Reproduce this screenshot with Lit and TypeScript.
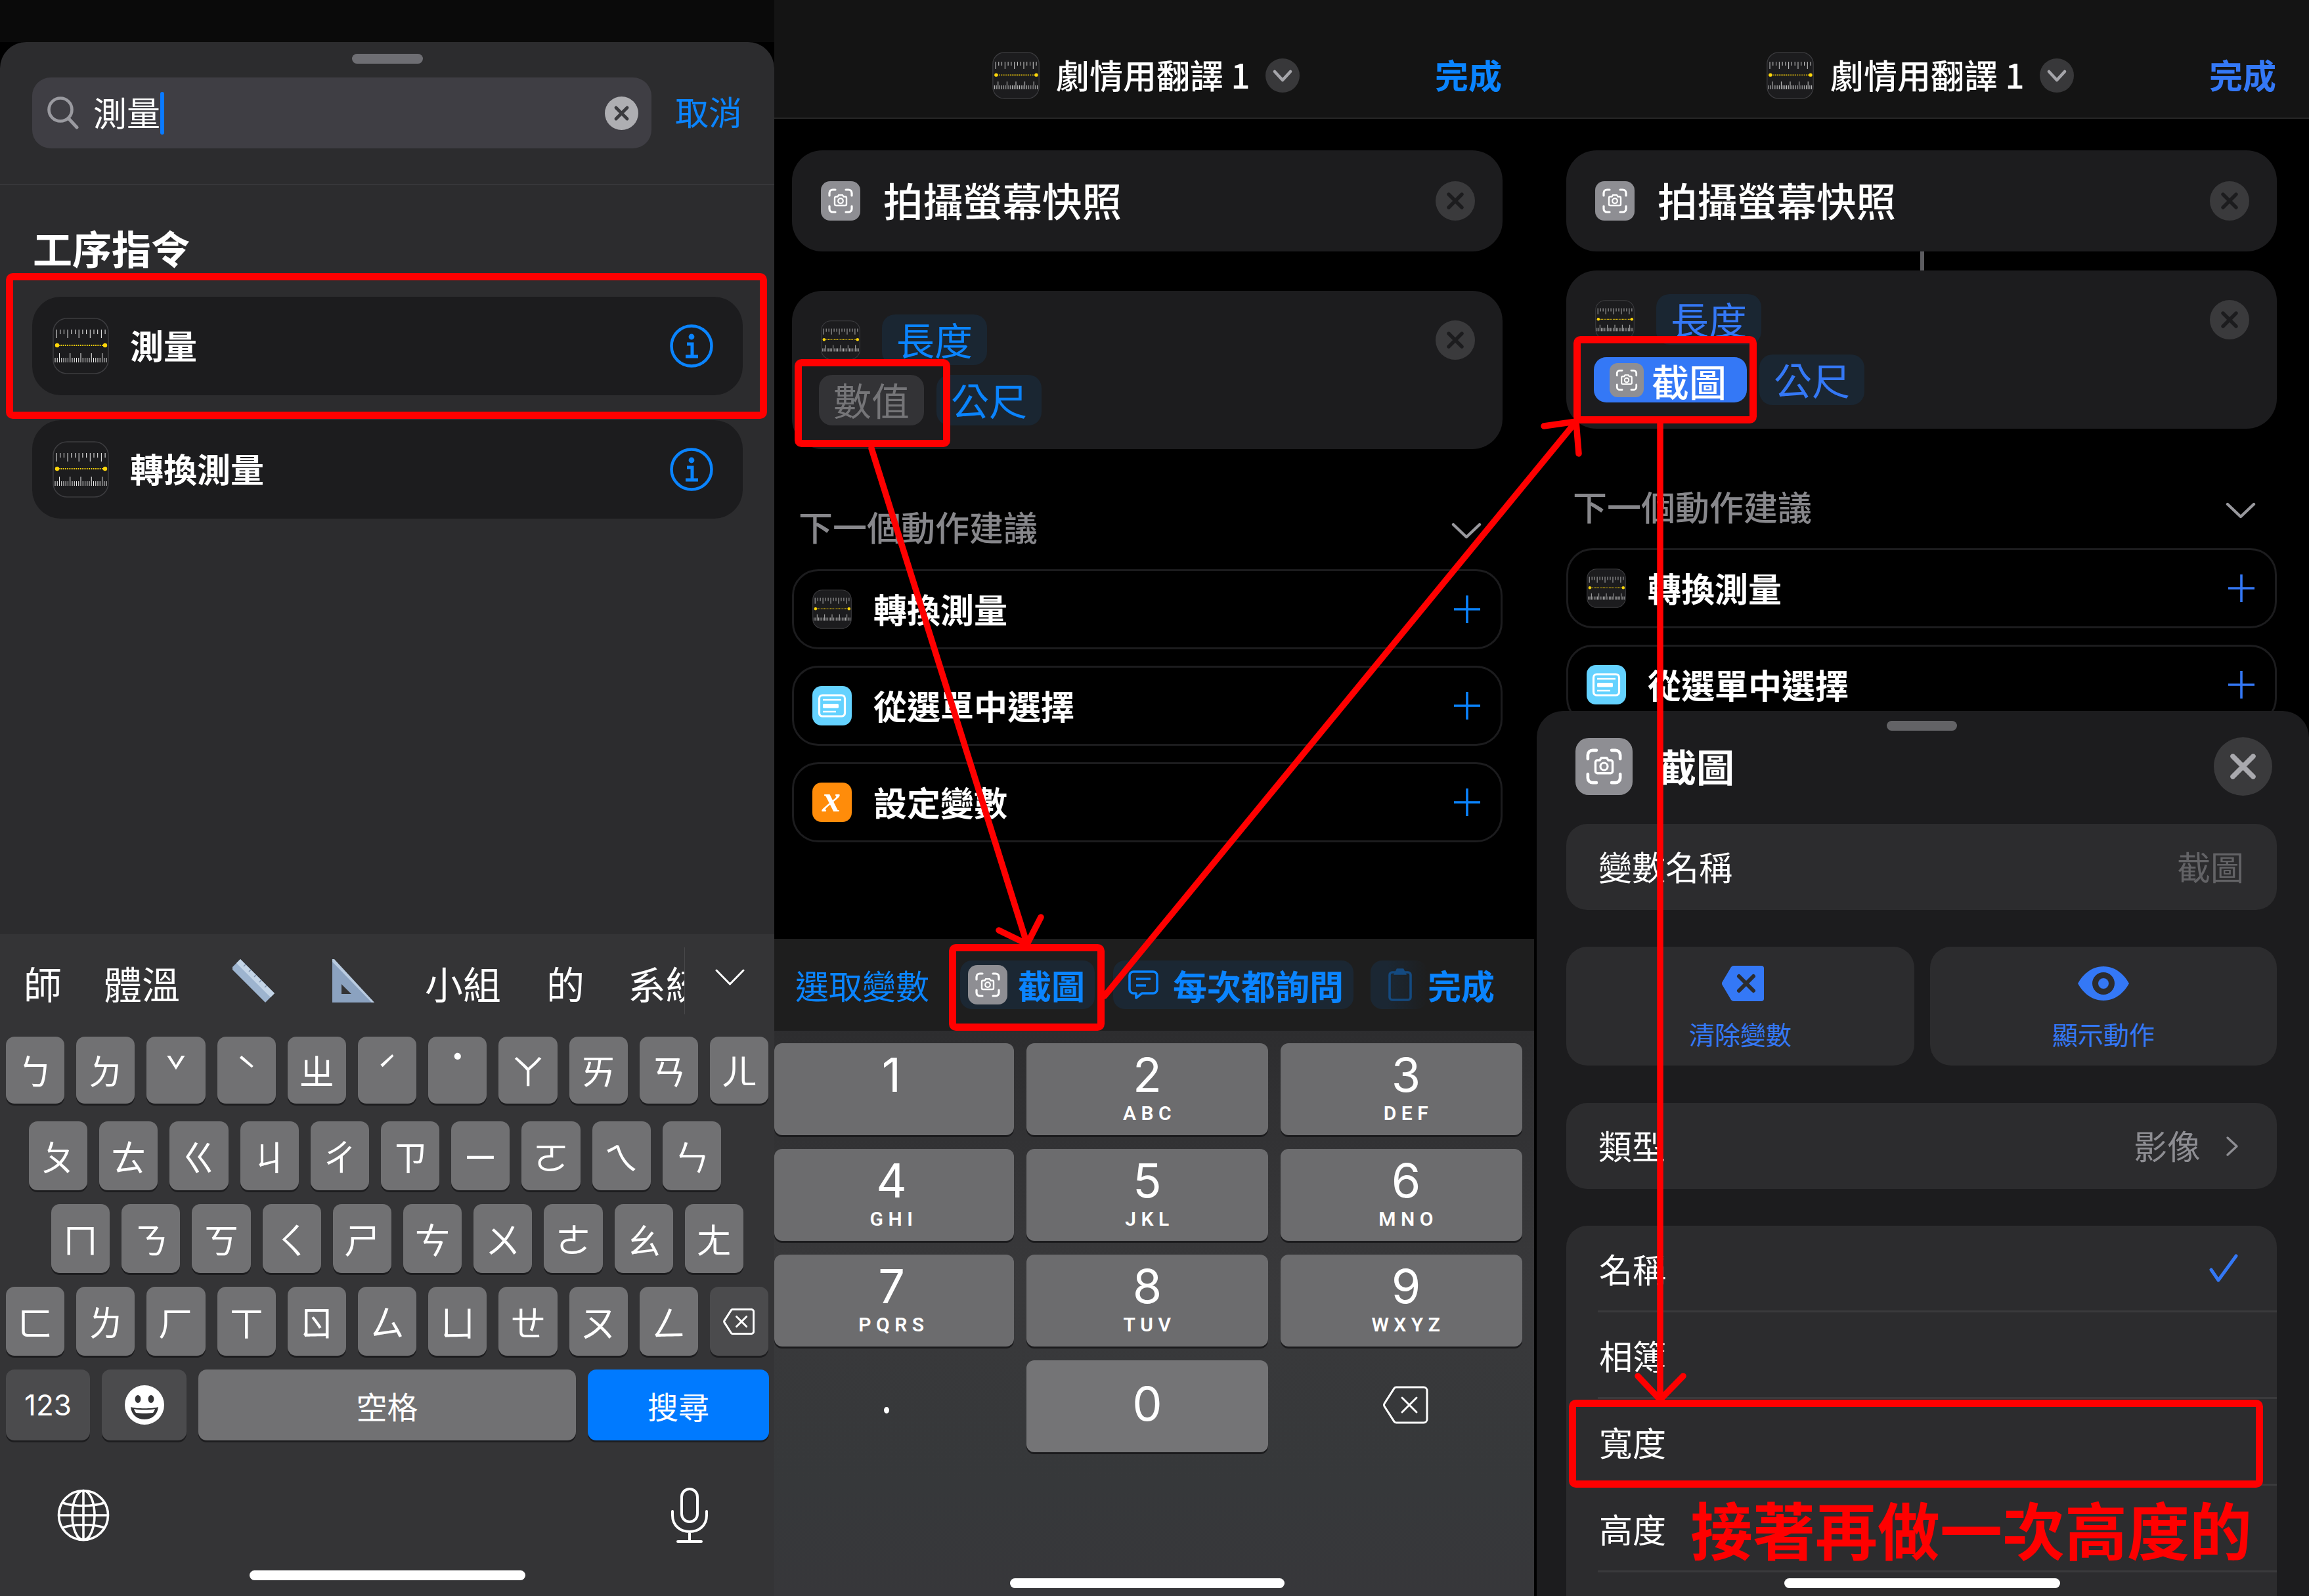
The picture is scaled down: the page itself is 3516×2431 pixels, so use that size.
import { LitElement, html, css, svg } from "lit";
import { customElement } from "lit/decorators.js";

const measureIcon = (cls: string) => {
  const top = Array.from({ length: 14 }, (_, i) => {
    const x = 6 + i * 5.7;
    return svg`<line x1=${x} x2=${x} y1="18" y2=${i % 3 === 0 ? 31 : 25}></line>`;
  });
  const bottom = Array.from({ length: 25 }, (_, i) => {
    const x = 4 + i * 3.25;
    return svg`<line x1=${x} x2=${x} y1="68" y2=${i % 5 === 2 ? 54 : 61}></line>`;
  });
  return html`<svg class=${cls} viewBox="0 0 86 86">
    <rect x="1" y="1" width="84" height="84" rx="21" fill="#1c1c1e" stroke="#3c3c3f" stroke-width="1.5"></rect>
    <g stroke="#f2f2f2" stroke-width="1">${top}${bottom}</g>
    <line x1="9" x2="78" y1="42" y2="42" stroke="#ffd60a" stroke-width="1.8" stroke-dasharray="1.8 1.5"></line>
    <circle cx="7" cy="42" r="3.2" fill="#ffd60a"></circle>
    <circle cx="80" cy="42" r="3.2" fill="#ffd60a"></circle>
  </svg>`;
};

const shotIcon = (cls: string) => html`<svg class=${cls} viewBox="0 0 60 60">
  <rect width="60" height="60" rx="14" fill="#8e8e93"></rect>
  <path d="M13 22v-4a5 5 0 0 1 5-5h4M38 13h4a5 5 0 0 1 5 5v4M47 38v4a5 5 0 0 1-5 5h-4M22 47h-4a5 5 0 0 1-5-5v-4" fill="none" stroke="#fff" stroke-width="3.2" stroke-linecap="round"></path>
  <path d="M21 25.5a2 2 0 0 1 2-2h2.5l1.6-2.4h5.8l1.6 2.4H37a2 2 0 0 1 2 2v9.5a2 2 0 0 1-2 2H23a2 2 0 0 1-2-2z" fill="none" stroke="#fff" stroke-width="2.4"></path>
  <circle cx="30" cy="30" r="3.8" fill="none" stroke="#fff" stroke-width="2.2"></circle>
</svg>`;

const menuIcon = (cls: string) => html`<svg class=${cls} viewBox="0 0 60 60">
  <rect width="60" height="60" rx="14" fill="#64d2ff"></rect>
  <rect x="10.5" y="14" width="39" height="32" rx="5" fill="none" stroke="#fff" stroke-width="3.2"></rect>
  <rect x="16" y="27" width="24" height="6.5" rx="1.5" fill="#fff"></rect>
  <path d="M16 21h28M16 39h20" stroke="#fff" stroke-width="2.6"></path>
</svg>`;

const varIcon = (cls: string) => html`<svg class=${cls} viewBox="0 0 60 60">
  <rect width="60" height="60" rx="14" fill="#ff8c0a"></rect>
  <text x="29" y="44" text-anchor="middle" font-family="Liberation Serif, serif" font-style="italic" font-weight="700" font-size="56" fill="#fff">x</text>
</svg>`;

const info = () => html`<svg class="info" viewBox="0 0 66 66">
  <circle cx="33" cy="33" r="30.5" fill="none" stroke="var(--blue)" stroke-width="4.5"></circle>
  <circle cx="33" cy="19" r="4.4" fill="var(--blue)"></circle>
  <path d="M26 30h8v19M24 49h19" fill="none" stroke="var(--blue)" stroke-width="5"></path>
</svg>`;

const xCircle = () => html`<svg class="xc" viewBox="0 0 60 60">
  <circle cx="30" cy="30" r="30" fill="#3a3a3c"></circle>
  <path d="M20 20l20 20M40 20L20 40" stroke="#1c1c1e" stroke-width="5.4" stroke-linecap="round"></path>
</svg>`;

const chevCircle = () => html`<svg class="chevc" viewBox="0 0 52 52">
  <circle cx="26" cy="26" r="26" fill="#38383a"></circle>
  <path d="M14 20l12 13 12-13" fill="none" stroke="#a5a5aa" stroke-width="4.6" stroke-linecap="round" stroke-linejoin="round"></path>
</svg>`;

const chevDown = () => html`<svg class="chevd" viewBox="0 0 46 25">
  <path d="M3 3l20 19L43 3" fill="none" stroke="#98989d" stroke-width="4.4" stroke-linecap="round" stroke-linejoin="round"></path>
</svg>`;

const plus = () => html`<svg class="plus" viewBox="0 0 40 42">
  <path d="M20 0v42M0 21h40" stroke="var(--blue)" stroke-width="3.6"></path>
</svg>`;

const backspace = (cls: string) => html`<svg class=${cls} viewBox="0 0 70 58">
  <path d="M21 2h42a5 5 0 0 1 5 5v44a5 5 0 0 1-5 5H21a4 4 0 0 1-3-1.6L3 31a4 4 0 0 1 0-4L18 3.6A4 4 0 0 1 21 2z" fill="none" stroke="#fff"></path>
  <path d="M30 18l22 22M52 18L30 40" stroke="#fff" stroke-linecap="round"></path>
</svg>`;

const KB = [
  ["ㄅ", "ㄉ", "ˇ", "ˋ", "ㄓ", "ˊ", "˙", "ㄚ", "ㄞ", "ㄢ", "ㄦ"],
  ["ㄆ", "ㄊ", "ㄍ", "ㄐ", "ㄔ", "ㄗ", "ㄧ", "ㄛ", "ㄟ", "ㄣ"],
  ["ㄇ", "ㄋ", "ㄎ", "ㄑ", "ㄕ", "ㄘ", "ㄨ", "ㄜ", "ㄠ", "ㄤ"],
  ["ㄈ", "ㄌ", "ㄏ", "ㄒ", "ㄖ", "ㄙ", "ㄩ", "ㄝ", "ㄡ", "ㄥ"],
];

const PAD: [string, string][] = [
  ["1", ""], ["2", "ABC"], ["3", "DEF"],
  ["4", "GHI"], ["5", "JKL"], ["6", "MNO"],
  ["7", "PQRS"], ["8", "TUV"], ["9", "WXYZ"],
];

@customElement("app-root")
export class AppRoot extends LitElement {
  static styles = css`
    :host {
      display: block;
      width: 3516px;
      height: 2431px;
      position: relative;
      overflow: hidden;
      background: #000;
      color: #fff;
      font-family: "Noto Sans CJK TC", "Noto Sans", sans-serif;
      --blue: #0a84ff;
    }
    svg { display: block; flex: none; }
    .stage {
      display: grid;
      grid-template-columns: 1179px 1157px 1180px;
      height: 2431px;
    }
    .panel {
      position: relative;
      overflow: hidden;
      display: flex;
      flex-direction: column;
      min-width: 0;
    }
    .p2 { --inset: 27px; --rt: 49px; }
    .p3 { --inset: 49px; --rt: 50px; --blue: #3478f6; }

    /* ---------- panel one ---------- */
    .top1 { height: 64px; background: #0a0a0a; flex: none; }
    .sheet1 {
      flex: 1;
      background: #2c2c2e;
      border-radius: 40px 40px 0 0;
      display: flex;
      flex-direction: column;
      min-height: 0;
    }
    .grab1 {
      width: 108px; height: 15px; border-radius: 8px;
      background: #6e6e73;
      margin: 18px 0 21px 536px;
      flex: none;
    }
    .searchrow { display: flex; align-items: center; padding: 0 0 0 49px; height: 108px; flex: none; }
    .search {
      width: 943px; height: 108px;
      border-radius: 28px;
      background: #3f3e44;
      display: flex; align-items: center;
      padding: 0 20px 0 23px;
      box-sizing: border-box;
      position: relative;
    }
    .mag { width: 48px; height: 50px; }
    .q { font-size: 51px; line-height: 60px; margin: -4px 0 0 22px; }
    .caret { width: 6px; height: 65px; border-radius: 3px; background: #0a7aff; margin-left: 0; }
    .clear { width: 51px; height: 51px; margin-left: auto; }
    .cancel { font-size: 51px; line-height: 60px; color: var(--blue); margin: -6px 0 0 36px; }
    .div1 { height: 1px; background: #434346; margin-top: 54px; flex: none; }
    .h1 { font-size: 60px; line-height: 70px; font-weight: 700; margin: 61px 0 0 50px; flex: none; }
    .res {
      margin: 0 48px 0 49px;
      height: 150px;
      border-radius: 44px;
      background: #1c1c1e;
      display: flex; align-items: center;
      padding: 0 45px 0 31px;
      flex: none;
    }
    .res1 { margin-top: 40px; }
    .res2 { margin-top: 38px; }
    .res .ic { width: 86px; height: 86px; }
    .res .t { font-size: 51px; font-weight: 700; line-height: 60px; margin: -4px 0 0 32px; }
    .info { width: 66px; height: 66px; margin-left: auto; }

    .kb {
      margin-top: auto;
      height: 1008px;
      background: #343436;
      flex: none;
      display: flex;
      flex-direction: column;
    }
    .cands { display: flex; height: 102px; margin-top: 20px; flex: none; align-items: center; }
    .cgrid {
      display: grid;
      grid-template-columns: 122px 196px 152px 141px 185px 124px 86px;
      padding-left: 36px;
      width: 1006px;
      align-items: center;
      font-size: 58px;
      line-height: 70px;
      white-space: nowrap;
      padding-top: 6px;
    }
    .clip { overflow: hidden; }
    .cdiv { width: 1px; height: 102px; background: #47474a; flex: none; }
    .emo { width: 64px; height: 66px; margin-top: -6px; }
    .cclose { width: 45px; height: 25px; margin-left: 46px; margin-top: -12px; }
    .krow { display: flex; gap: 18px; flex: none; }
    .key {
      flex: 0 0 89.2px;
      background: #717173;
      border-radius: 13px;
      box-shadow: 0 3px 0 #1d1d1f;
      display: flex; align-items: center; justify-content: center;
      font-size: 54px;
      line-height: 60px;
    }
    .key.raise span { padding-bottom: 46px; }
    .key.dark { background: #4b4b4d; }
    .kr1 { height: 102px; margin: 34px 0 0 9px; }
    .kr2 { height: 105px; margin: 27px 0 0 44px; }
    .kr3 { height: 105px; margin: 21px 0 0 78px; }
    .kr4 { height: 105px; margin: 21px 0 0 9px; }
    .kr5 {
      display: grid;
      grid-template-columns: 128px 129px 575px 276px;
      gap: 18px;
      height: 108px;
      margin: 21px 0 0 9px;
      flex: none;
    }
    .k5 {
      background: #717173;
      border-radius: 13px;
      box-shadow: 0 3px 0 #1d1d1f;
      display: flex; align-items: center; justify-content: center;
      font-size: 47px;
    }
    .k5.dark { background: #4b4b4d; }
    .k5.num { font-family: "Inter", sans-serif; font-size: 44px; }
    .k5.go { background: #007aff; }
    .bs1 { width: 48px; height: 40px; stroke-width: 4.4; }
    .bs2 { width: 70px; height: 58px; stroke-width: 3; margin: -4px 0 0 12px; }
    .face { width: 60px; height: 60px; }
    .sys { display: flex; justify-content: space-between; height: 84px; margin-top: 72px; padding: 0 101px 0 87px; flex: none; align-items: center; }
    .globe { width: 80px; height: 80px; }
    .mic { width: 56px; height: 84px; }
    .home { height: 15px; background: #fff; border-radius: 8px; flex: none; }
    .home1 { width: 420px; margin: 42px 0 0 380px; }

    /* ---------- shared, panels two and three ---------- */
    .hdr {
      height: 181px;
      background: #141414;
      border-bottom: 2px solid #262626;
      box-sizing: border-box;
      display: flex; align-items: center;
      padding-top: 50px;
      padding-left: calc(var(--inset) + 305px);
      padding-right: var(--rt);
      flex: none;
    }
    .hdr .ic { width: 72px; height: 72px; }
    .hdr .tt { font-size: 51px; font-weight: 500; line-height: 60px; margin: -3px 0 0 25px; white-space: nowrap; }
    .chevc { width: 52px; height: 52px; margin-left: 23px; }
    .done { font-size: 51px; font-weight: 700; line-height: 60px; color: var(--blue); margin: -3px 0 0 auto; }
    .card {
      margin-left: var(--inset);
      width: 1082px;
      background: #1c1c1e;
      border-radius: 46px;
      flex: none;
    }
    .c1 {
      height: 154px; margin-top: 48px;
      display: flex; align-items: center;
      padding: 0 42px 0 44px;
      box-sizing: border-box;
    }
    .c1 .si { width: 60px; height: 60px; }
    .c1 .t { font-size: 60.500px; line-height: 70px; font-weight: 500; margin: -5px 0 0 35px; white-space: nowrap; }
    .xc { width: 60px; height: 60px; margin-left: auto; }
    .conn { width: 6px; height: 29px; background: #5c5c60; margin-left: calc(var(--inset) + 539px); flex: none; }
    .c2 {
      height: 241px;
      padding: 36px 42px 0 41px;
      box-sizing: border-box;
    }
    .p2 .c2 { margin-top: 60px; }
    .line { display: flex; align-items: center; height: 77px; }
    .line + .line { margin-top: 15px; gap: 19px; }
    .line .m { width: 60px; height: 60px; margin: 0 33px 0 3px; }
    .pill {
      height: 77px; line-height: 74px;
      padding: 0 22px;
      border-radius: 20px;
      background: #1a2632;
      color: var(--blue);
      font-size: 58px;
      box-sizing: border-box;
      white-space: nowrap;
    }
    .pill.ghost { background: #333336; color: #757578; }
    .pill.var {
      height: 69px;
      width: 233px;
      padding: 0 0 0 24px;
      background: #3478f6;
      color: #fff;
      border-radius: 19px;
      display: flex; align-items: center;
      font-weight: 500;
      margin-left: 1px;
    }
    .pill.var svg { width: 52px; height: 52px; margin-right: 12px; }
    .pill.var span { font-size: 57px; line-height: 66px; }
    .lab {
      margin-left: calc(var(--inset) + 10px);
      width: 1040px;
      height: 54px;
      display: flex; align-items: center; justify-content: space-between;
      color: #87878b;
      font-size: 52px;
      font-weight: 500;
      flex: none;
    }
    .chevd { width: 46px; height: 25px; margin-top: 10px; }
    .lab > span { margin-top: -3px; }
    .p2 .lab { margin-top: 92px; margin-bottom: 37px; }
    .p3 .lab { margin-top: 92px; margin-bottom: 36px; }
    .sug {
      margin-left: var(--inset);
      width: 1082px;
      height: 122px;
      box-sizing: border-box;
      border: 3px solid #1c1c1e;
      border-radius: 40px;
      display: flex; align-items: center;
      padding: 0 31px 0 28px;
      flex: none;
    }
    .sug + .sug { margin-top: 25px; }
    .sug .si { width: 60px; height: 60px; }
    .sug .t { font-size: 51px; font-weight: 700; line-height: 60px; margin: -3px 0 0 33px; white-space: nowrap; }
    .plus { width: 40px; height: 42px; margin-left: auto; }

    /* ---------- panel two bottom ---------- */
    .tools {
      margin-top: auto;
      height: 140px;
      background: #1e1e1e;
      display: flex; align-items: center;
      flex: none;
      font-size: 51px;
      color: var(--blue);
      white-space: nowrap;
      padding-left: 32px;
      box-sizing: border-box;
    }
    .tpill {
      height: 74px; border-radius: 18px; background: #1b2733;
      display: flex; align-items: center;
      flex: none;
    }
    .tp1 { width: 205px; margin-left: 47px; padding-left: 12px; box-sizing: border-box; font-weight: 700; }
    .tp1 svg { width: 60px; height: 60px; margin-right: 16px; }
    .tp2 { width: 366px; margin-left: 28px; padding-left: 23px; box-sizing: border-box; font-weight: 700; font-size: 52px; }
    .tp2 svg { width: 46px; height: 44px; margin-right: 22px; }
    .tp3 {
      width: 87px; margin-left: 26px; padding-left: 27px; box-sizing: border-box;
      background: linear-gradient(90deg, #1b2733 30%, rgba(30, 30, 30, 0) 100%);
    }
    .tp3 svg { width: 36px; height: 50px; }
    .tdone { font-weight: 700; margin-left: 0; }
    .pad {
      height: 861px;
      background: linear-gradient(180deg, #2d2d2f 0%, #39393b 45%, #36383a 80%, #37373a 100%);
      flex: none;
      display: flex;
      flex-direction: column;
    }
    .pgrid {
      display: grid;
      grid-template-columns: 365px 368px 368px;
      grid-auto-rows: 140px;
      column-gap: 19px;
      row-gap: 21px;
      margin-top: 19px;
    }
    .pk {
      background: #6c6c6e;
      border-radius: 12px;
      box-shadow: 0 3px 0 #1b1b1d;
      display: flex; flex-direction: column; align-items: center;
      font-family: "Inter", "Roboto", sans-serif;
    }
    .pk:nth-child(3n) span { position: relative; left: 7px; }
    .pk:nth-child(3n + 1) span { position: relative; left: -4px; }
    .pk .d { font-size: 72px; line-height: 80px; margin-top: 8px; font-weight: 400; }
    .pk .l { font-size: 30px; line-height: 30px; letter-spacing: 7.5px; margin: 4px 0 0 7px; font-weight: 600; font-family: "Roboto", sans-serif; }
    .pk.zero { background: #747476; justify-content: center; }
    .pk.zero .d { margin-top: -8px; }
    .pk.plain { background: none; box-shadow: none; justify-content: center; }
    .pk .dot { width: 8px; height: 10px; border-radius: 50%; background: #fff; margin: 12px 0 0 -16px; }
    .home2 { width: 418px; margin: auto 0 12px 359px; }

    /* ---------- panel three sheet ---------- */
    .sheet3 {
      position: absolute;
      left: 4px; right: 0; top: 1083px; bottom: 0;
      background: #1c1c1e;
      border-radius: 40px 40px 0 0;
      padding: 0 49px 0 45px;
      box-sizing: border-box;
      display: flex; flex-direction: column;
    }
    .grab3 { width: 107px; height: 15px; border-radius: 8px; background: #636366; margin: 15px 0 10px 488px; flex: none; }
    .shead { display: flex; align-items: center; height: 89px; flex: none; padding: 0 7px 0 14px; }
    .shead .si { width: 87px; height: 87px; }
    .shead .t { font-size: 58px; font-weight: 700; line-height: 70px; margin: -3px 0 0 39px; }
    .closex { width: 89px; height: 89px; margin-left: auto; }
    .fld {
      height: 131px;
      background: #2c2c2e;
      border-radius: 32px;
      display: flex; align-items: center;
      padding: 0 50px 0 49px;
      font-size: 51px;
      line-height: 60px;
      flex: none;
    }
    .fld span { margin-top: -3px; }
    .f1 { margin-top: 43px; }
    .f2 { margin-top: 57px; }
    .fld .dim { margin-left: auto; color: #636366; }
    .fld .gry { margin-left: auto; color: #8e8e93; }
    .chevr { width: 20px; height: 32px; margin: 0 8px 0 38px; }
    .btns { display: grid; grid-template-columns: 530px 528px; gap: 24px; margin-top: 56px; flex: none; }
    .btn {
      height: 181px;
      background: #2c2c2e;
      border-radius: 32px;
      display: flex; flex-direction: column; align-items: center;
      color: #3478f6;
      font-size: 39px;
      line-height: 46px;
    }
    .btn svg { width: 80px; height: 56px; margin: 28px 0 25px; }
    .list {
      margin-top: 56px;
      background: #2c2c2e;
      border-radius: 32px 32px 0 0;
      flex: 1;
      font-size: 51px;
      line-height: 60px;
      padding-left: 48px;
    }
    .li {
      height: 132px;
      box-sizing: border-box;
      border-bottom: 3px solid #3a3a3c;
      display: flex; align-items: center;
      padding-left: 2px;
    }
    .check { width: 44px; height: 43px; margin: 0 59px 0 auto; }
    .note { color: #ff0000; font-size: 95px; line-height: 110px; font-weight: 700; margin-left: 37px; white-space: nowrap; letter-spacing: 0; }
    .home3 { position: absolute; left: 377px; bottom: 12px; width: 420px; }

    .notes { position: absolute; left: 0; top: 0; width: 3516px; height: 2431px; pointer-events: none; }
  `;

  private keyboard() {
    return html`<div class="kb">
      <div class="cands">
        <div class="cgrid">
          <span>師</span><span>體溫</span>
          <svg class="emo" viewBox="0 0 64 66">
            <path d="M12 0L64 52 50 66-2 14z" fill="#9db4cf"></path>
            <path d="M12 0L64 52 58 58 6 6z" fill="#c3d4e6"></path>
            <path d="M20 8l-3 3M28 16l-3 3M36 24l-3 3M44 32l-3 3M52 40l-3 3" stroke="#7d93ae" stroke-width="1.5"></path>
          </svg>
          <svg class="emo" viewBox="0 0 64 66">
            <path fill-rule="evenodd" d="M0 0L64 66H0zM14 38v15h15z" fill="#8ba2c0"></path>
            <path d="M0 0l3 0 61 66H60L0 4z" fill="#b9cbe0"></path>
          </svg>
          <span>小組</span><span>的</span><span class="clip">系統</span>
        </div>
        <div class="cdiv"></div>
        <svg class="cclose" viewBox="0 0 45 25">
          <path d="M2 2l20.500 21L43 2" fill="none" stroke="#fff" stroke-width="3" stroke-linecap="round" stroke-linejoin="round"></path>
        </svg>
      </div>
      ${KB.map(
        (row, i) => html`<div class="krow kr${i + 1}">
          ${row.map((k) => html`<div class="key ${k === "˙" ? "raise" : ""}"><span>${k}</span></div>`)}
          ${i === 3 ? html`<div class="key dark">${backspace("bs1")}</div>` : ""}
        </div>`
      )}
      <div class="kr5">
        <div class="k5 dark num">123</div>
        <div class="k5 dark">
          <svg class="face" viewBox="0 0 60 60">
            <circle cx="30" cy="30" r="30" fill="#fff"></circle>
            <ellipse cx="20" cy="21" rx="4.400" ry="6" fill="#343436"></ellipse>
            <ellipse cx="40" cy="21" rx="4.400" ry="6" fill="#343436"></ellipse>
            <path d="M9 33c7 3 35 3 42 0-1 12-10 19-21 19S10 45 9 33z" fill="#343436"></path>
            <path d="M14 36c8 2 24 2 32 0-1 3-2 5-3 6-8 1-18 1-26 0-1-1-2-3-3-6z" fill="#fff"></path>
          </svg>
        </div>
        <div class="k5">空格</div>
        <div class="k5 go">搜尋</div>
      </div>
      <div class="sys">
        <svg class="globe" viewBox="0 0 80 80" fill="none" stroke="#fff" stroke-width="3.6">
          <circle cx="40" cy="40" r="37.500"></circle>
          <ellipse cx="40" cy="40" rx="17" ry="37.500"></ellipse>
          <path d="M40 2v76M2.500 40h75M8 21c18 6 46 6 64 0M8 59c18-6 46-6 64 0"></path>
        </svg>
        <svg class="mic" viewBox="0 0 56 84" fill="none" stroke="#fff" stroke-width="4">
          <rect x="16" y="2" width="24" height="50" rx="12"></rect>
          <path d="M2 36v6c0 16 12 25 26 25s26-9 26-25v-6M28 67v15M10 82h36" stroke-linecap="round"></path>
        </svg>
      </div>
      <div class="home home1"></div>
    </div>`;
  }

  private header() {
    return html`<div class="hdr">
      ${measureIcon("ic")}
      <span class="tt">劇情用翻譯 1</span>
      ${chevCircle()}
      <span class="done">完成</span>
    </div>`;
  }

  private suggestions() {
    return html`<div class="sug">${measureIcon("si")}<span class="t">轉換測量</span>${plus()}</div>
      <div class="sug">${menuIcon("si")}<span class="t">從選單中選擇</span>${plus()}</div>`;
  }

  render() {
    const i = this.keyboard();
    return html`<div class="stage">
        <section class="panel p1">
          <div class="top1"></div>
          <div class="sheet1">
            <div class="grab1"></div>
            <div class="searchrow">
              <div class="search">
                <svg class="mag" viewBox="0 0 48 50" fill="none" stroke="#9a9aa0" stroke-width="4.600">
                  <circle cx="20" cy="20" r="17.500"></circle>
                  <path d="M32 33l13 14" stroke-linecap="round" stroke-width="5"></path>
                </svg>
                <span class="q">測量</span><span class="caret"></span>
                <svg class="clear" viewBox="0 0 51 51">
                  <circle cx="25.500" cy="25.500" r="25.500" fill="#aeaeb2"></circle>
                  <path d="M17 17l17 17M34 17L17 34" stroke="#3a3a3e" stroke-width="4.800" stroke-linecap="round"></path>
                </svg>
              </div>
              <span class="cancel">取消</span>
            </div>
            <div class="div1"></div>
            <div class="h1">工序指令</div>
            <div class="res res1">${measureIcon("ic")}<span class="t">測量</span>${info()}</div>
            <div class="res res2">${measureIcon("ic")}<span class="t">轉換測量</span>${info()}</div>
            ${i}
          </div>
        </section>

        <section class="panel p2">
          ${this.header()}
          <div class="card c1">${shotIcon("si")}<span class="t">拍攝螢幕快照</span>${xCircle()}</div>
          <div class="card c2">
            <div class="line">${measureIcon("m")}<span class="pill">長度</span>${xCircle()}</div>
            <div class="line"><span class="pill ghost">數值</span><span class="pill">公尺</span></div>
          </div>
          <div class="lab"><span>下一個動作建議</span>${chevDown()}</div>
          ${this.suggestions()}
          <div class="sug">${varIcon("si")}<span class="t">設定變數</span>${plus()}</div>
          <div class="tools">
            <span>選取變數</span>
            <div class="tpill tp1">${shotIcon("")}<span>截圖</span></div>
            <div class="tpill tp2">
              <svg viewBox="0 0 46 44" fill="none" stroke="#0a84ff" stroke-width="3.600">
                <path d="M8 2h30a6 6 0 0 1 6 6v21a6 6 0 0 1-6 6H21l-9 7v-7H8a6 6 0 0 1-6-6V8a6 6 0 0 1 6-6z" stroke-linejoin="round"></path>
                <path d="M12 13h22M12 23h15"></path>
              </svg>
              <span>每次都詢問</span>
            </div>
            <div class="tpill tp3">
              <svg viewBox="0 0 36 50" fill="none" stroke="#144a80" stroke-width="3.600">
                <path d="M11 6H6a4 4 0 0 0-4 4v34a4 4 0 0 0 4 4h24a4 4 0 0 0 4-4V10a4 4 0 0 0-4-4h-5"></path>
                <path d="M11 8l3-6h8l3 6z" fill="#144a80"></path>
              </svg>
            </div>
            <span class="tdone">完成</span>
          </div>
          <div class="pad">
            <div class="pgrid">
              ${PAD.map(
                ([d, l]) => html`<div class="pk"><span class="d">${d}</span><span class="l">${l}</span></div>`
              )}
              <div class="pk plain"><span class="dot"></span></div>
              <div class="pk zero"><span class="d">0</span></div>
              <div class="pk plain">${backspace("bs2")}</div>
            </div>
            <div class="home home2"></div>
          </div>
        </section>

        <section class="panel p3">
          ${this.header()}
          <div class="card c1">${shotIcon("si")}<span class="t">拍攝螢幕快照</span>${xCircle()}</div>
          <div class="conn"></div>
          <div class="card c2">
            <div class="line">${measureIcon("m")}<span class="pill">長度</span>${xCircle()}</div>
            <div class="line">
              <span class="pill var">${shotIcon("")}<span>截圖</span></span>
              <span class="pill">公尺</span>
            </div>
          </div>
          <div class="lab"><span>下一個動作建議</span>${chevDown()}</div>
          ${this.suggestions()}
          <div class="sheet3">
            <div class="grab3"></div>
            <div class="shead">
              ${shotIcon("si")}
              <span class="t">截圖</span>
              <svg class="closex" viewBox="0 0 89 89">
                <circle cx="44.500" cy="44.500" r="44.500" fill="#3a3a3c"></circle>
                <path d="M29 29l31 31M60 29L29 60" stroke="#a9a9ae" stroke-width="7.500" stroke-linecap="round"></path>
              </svg>
            </div>
            <div class="fld f1"><span>變數名稱</span><span class="dim">截圖</span></div>
            <div class="btns">
              <div class="btn">
                <svg viewBox="0 0 80 56">
                  <path d="M30 1h42a4 4 0 0 1 4 4v46a4 4 0 0 1-4 4H30a5 5 0 0 1-4-2L13 31a5 5 0 0 1 0-6L26 3a5 5 0 0 1 4-2z" fill="#3478f6"></path>
                  <path d="M38 17l22 22M60 17L38 39" stroke="#2c2c2e" stroke-width="6" stroke-linecap="round"></path>
                </svg>
                <span>清除變數</span>
              </div>
              <div class="btn">
                <svg viewBox="0 0 80 56">
                  <path d="M40 2c20 0 33 15 39 26-6 11-19 26-39 26S7 39 1 28C7 17 20 2 40 2z" fill="#3478f6"></path>
                  <circle cx="40" cy="28" r="17" fill="#2c2c2e"></circle>
                  <circle cx="40" cy="28" r="8" fill="#3478f6"></circle>
                </svg>
                <span>顯示動作</span>
              </div>
            </div>
            <div class="fld f2">
              <span>類型</span><span class="gry">影像</span>
              <svg class="chevr" viewBox="0 0 20 32">
                <path d="M3 3l14 13L3 29" fill="none" stroke="#8e8e93" stroke-width="3.400" stroke-linecap="round" stroke-linejoin="round"></path>
              </svg>
            </div>
            <div class="list">
              <div class="li">
                <span>名稱</span>
                <svg class="check" viewBox="0 0 44 43">
                  <path d="M3 24l11 16L41 3" fill="none" stroke="#3478f6" stroke-width="5" stroke-linecap="round" stroke-linejoin="round"></path>
                </svg>
              </div>
              <div class="li"><span>相簿</span></div>
              <div class="li"><span>寬度</span></div>
              <div class="li"><span>高度</span><span class="note">接著再做一次高度的</span></div>
            </div>
            <div class="home home3"></div>
          </div>
        </section>
      </div>

      <svg class="notes" viewBox="0 0 3516 2431" fill="none" stroke="#ff0000" stroke-linecap="round" stroke-linejoin="round">
        <g stroke-width="11">
          <rect x="14.500" y="421.500" width="1148" height="211" rx="5"></rect>
          <rect x="1215.500" y="552.500" width="226" height="123" rx="5"></rect>
          <rect x="1450.500" y="1443.500" width="226" height="121" rx="5"></rect>
          <rect x="2401.500" y="517.500" width="268" height="122" rx="5"></rect>
          <rect x="2394.500" y="2137.500" width="1046" height="123" rx="5"></rect>
        </g>
        <g stroke-width="9.500">
          <path d="M1327 683L1564 1438M1521 1417L1564 1438 1585 1397"></path>
          <path d="M1682 1517L2400 642M2351 649L2400 642 2404 691"></path>
          <path d="M2528 645V2130M2494 2096L2528 2132 2563 2096"></path>
        </g>
      </svg>`;
  }
}
